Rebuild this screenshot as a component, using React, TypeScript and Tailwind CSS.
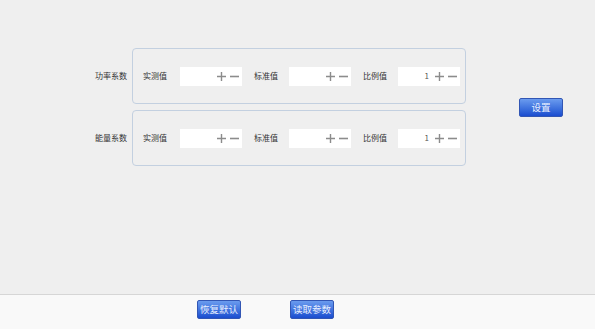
import React from "react";

const font = { fontFamily: '"Noto Sans CJK SC", "Noto Sans", sans-serif' };

interface FieldProps {
  label: string;
  value?: string;
  first?: boolean;
}

// small +/- stepper drawn inside each input box
const Stepper = () => (
  <div className="flex items-center gap-[4px]">
    <svg width="9" height="9" viewBox="0 0 9 9">
      <path d="M0 4.5H9M4.5 0V9" stroke="#8c8c8c" strokeWidth="1.4" />
    </svg>
    <svg width="9" height="9" viewBox="0 0 9 9">
      <path d="M0 4.5H9" stroke="#8c8c8c" strokeWidth="1.6" />
    </svg>
  </div>
);

const Field: React.FC<FieldProps> = ({ label, value, first }) => {
  return (
    <div className={`flex items-center ${first ? "" : "ml-[12px]"}`}>
      <span className={`${first ? "w-[37px]" : "w-[35px]"} text-[8px] text-[#333]`}>{label}</span>
      <div className="flex h-[19px] w-[62px] items-center justify-end bg-white pr-[3px]">
        {value && <span className="mr-[6px] text-[8px] text-[#555]">{value}</span>}
        <Stepper />
      </div>
    </div>
  );
};

const BlueButton: React.FC<{ text: string; className?: string }> = ({ text, className }) => (
  <button
    className={`flex h-[19px] w-[44px] items-center justify-center rounded-[2px] border border-[#3256b4] bg-gradient-to-b from-[#6b9bee] to-[#1b4ccf] text-[9.5px] text-[#e8efff] ${className ?? ""}`}
  >
    {text}
  </button>
);

const CoefRow: React.FC<{ name: string; className?: string }> = ({ name, className }) => (
  <div className={`flex items-center ${className ?? ""}`}>
    <div className="mr-[4px] w-[128px] pr-[1px] text-right text-[8px] text-[#333]">{name}</div>
    <div className="flex h-[56px] w-[334px] items-center rounded-[4px] border border-[#c3d0e0] pl-[10px]">
      <Field label="实测值" first />
      <Field label="标准值" />
      <Field label="比例值" value="1" />
    </div>
  </div>
);

export default function App() {
  return (
    <div className="flex h-[329px] w-[595px] flex-col bg-[#efefef]" style={font}>
      <div className="flex h-[294px] items-start pt-[48px]">
        <div className="flex items-center">
          <div className="flex flex-col">
            <CoefRow name="功率系数" />
            <CoefRow name="能量系数" className="mt-[6px]" />
          </div>
          <BlueButton text="设置" className="ml-[53px]" />
        </div>
      </div>
      <div className="flex flex-1 items-start border-t border-[#d6d6d6] bg-[#f9f9f9] pt-[5px]">
        <BlueButton text="恢复默认" className="ml-[197px]" />
        <BlueButton text="读取参数" className="ml-[49px]" />
      </div>
    </div>
  );
}
